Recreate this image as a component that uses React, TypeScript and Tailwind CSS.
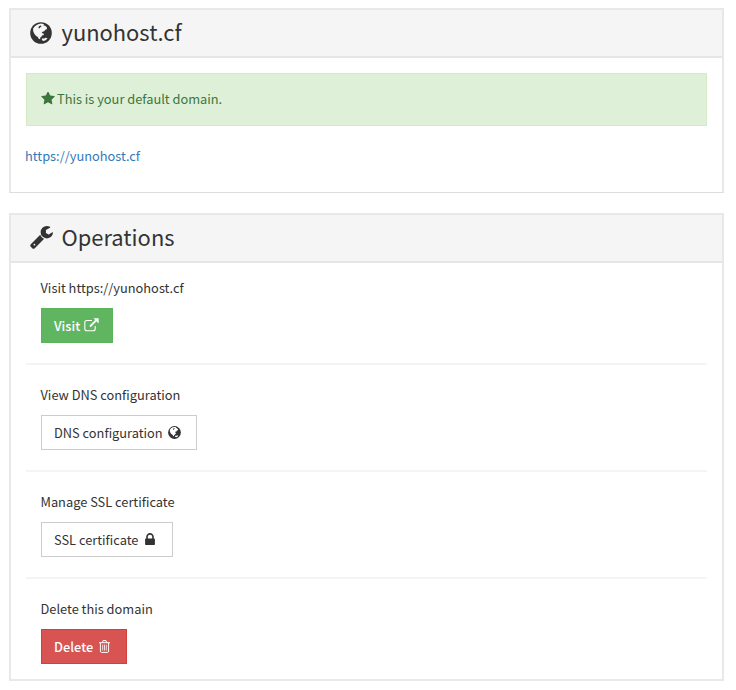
import type { ReactNode } from "react";

function Globe({ className, land }: { className: string; land: string }) {
  return (
    <svg viewBox="0 0 22 22" className={className} fill="currentColor">
      <circle cx="11" cy="11" r="10.8" />
      <g className={land}>
        <path d="M3.1 6.4 5.1 4 8 2.3l3.2-.7 2.9.6-.7 1.2 1.9.3 1.7 1.9-.3 1.8-1.5.3-.9 1.5-1.8.5-.8 1.3 1.8.5.4 1.4-1.5.4-.9 1.3-1.2.9-.2 1.7-1.4-.4-.9-1.8-1.9-1.2-1.6-2-1.1-2.5z" />
        <path d="m11.8 16.4 2.5.2 1.4-.8 1.8.5-1.5 1.8-2.2.9-1.8-.8z" />
      </g>
      <path d="m9.4 4 1.5-.4.6 1-1.2.7-.4 1-1.2-.1-.2-1.2z" />
    </svg>
  );
}

function Wrench() {
  return (
    <svg viewBox="64 128 1664 1664" className="h-[23px] w-[23px]" fill="currentColor">
      <path d="M448 1472q0-26-19-45t-45-19-45 19-19 45 19 45 45 19 45-19 19-45zm644-420l-682 682q-37 37-90 37-52 0-91-37l-106-108q-38-36-38-90 0-53 38-91l681-681q39 98 114.5 173.5t173.5 114.5zm634-435q0 39-23 106-47 134-164.5 217.5t-258.5 83.5q-185 0-316.5-131.5t-131.5-316.5 131.5-316.5 316.5-131.5q58 0 121.5 16.5t107.5 46.5q16 11 16 28t-16 28l-293 169v224l193 107q5-3 79-48.5t135.5-81 70.5-35.5q15 0 23.5 10t8.5 25z" />
    </svg>
  );
}

function Star() {
  return (
    <svg viewBox="64 96 1664 1600" className="h-[13px] w-[14px]" fill="currentColor">
      <path d="M1728 647q0 22-26 48l-363 354 86 500q1 7 1 20 0 21-10.5 35.5t-30.5 14.5q-19 0-40-12l-449-236-449 236q-22 12-40 12-21 0-31.5-14.5t-10.5-35.5q0-6 2-20l86-500-364-354q-25-27-25-48 0-37 56-46l502-73 225-455q19-41 49-41t49 41l225 455 502 73q56 9 56 46z" />
    </svg>
  );
}

function Lock() {
  return (
    <svg viewBox="320 128 1152 1408" className="-mt-px h-[12px] w-[10px]" fill="currentColor">
      <path d="M640 768h512v-192q0-106-75-181t-181-75-181 75-75 181v192zm832 96v576q0 40-28 68t-68 28h-960q-40 0-68-28t-28-68v-576q0-40 28-68t68-28h32v-192q0-184 132-316t316-132 316 132 132 316v192h32q40 0 68 28t28 68z" />
    </svg>
  );
}

function External() {
  return (
    <svg viewBox="0 0 15 14" className="-mt-0.5 h-[14px] w-[15px]" fill="none" stroke="currentColor">
      <path d="M8 2.5H2.8Q.8 2.5.8 4.5v6.2q0 2 2 2h6.4q2 0 2-2V8" strokeWidth="1.1" />
      <path d="m6 8.5 6-6" strokeWidth="1.8" />
      <path d="M9.5.3h5.1v5.1z" fill="currentColor" stroke="none" />
    </svg>
  );
}

function Trash() {
  return (
    <svg viewBox="0 0 11 13" className="h-[13px] w-[11px]" fill="none" stroke="currentColor">
      <path d="M0 2.7h11M3.4 2.5l.6-1.9h3l.6 1.9M1.4 3v8.1q0 1.3 1.2 1.3h5.8q1.2 0 1.2-1.3V3" />
      <path d="M3.7 4.7v5.8M5.5 4.7v5.8M7.3 4.7v5.8" strokeWidth=".8" />
    </svg>
  );
}

function Panel({ icon, title, className, children }: { icon: ReactNode; title: string; className: string; children: ReactNode }) {
  return (
    <section className={`border-2 border-[#e8e8e8] bg-white ${className}`}>
      <h2 className="flex h-[48px] items-center border-b-2 border-[#e6e6e6] bg-[#f5f5f5] pl-[19px] text-[21.9px]">
        <span className="-mt-px mr-[8.5px] w-[23px]">{icon}</span>
        <span className="-mt-[3px] leading-[30px]">{title}</span>
      </h2>
      {children}
    </section>
  );
}

function Operation({ label, button, icon, tone }: { label: string; button: string; icon: ReactNode; tone: string }) {
  return (
    <div className="h-[107px] border-b-2 border-[#f4f4f4] px-[15px] pt-[19px] last:border-0">
      <p className="-ml-[0.5px] mb-[9px] h-[22px] leading-[22px]">{label}</p>
      <button className={`flex h-[35px] items-center border pl-3 ${tone}`}>
        <span>{button}</span>
        {icon}
      </button>
    </div>
  );
}

export default function App() {
  return (
    <main className="h-[690px] overflow-hidden bg-white px-[9px] pt-2 font-['Noto_Sans_CJK_SC',sans-serif] text-[12.82px] text-[#333333]">
      <div className="w-[715px]">
        <Panel icon={<Globe land="fill-[#f5f5f5]" className="h-[22px] w-[22px]" />} title="yunohost.cf" className="h-[185px] border-b border-b-[#dddddd]">
          <div className="px-[15px] pt-[15px]">
            <div className="mb-[19px] flex h-[53px] items-center border border-[#d6e9c6] bg-[#dff0d8] pb-0.5 pl-[14px] text-[#3c763d]">
              <Star />
              <span className="ml-0.5">This is your default domain.</span>
            </div>
            <a className="-ml-px block leading-[22px] text-[#337ab7]">https://yunohost.cf</a>
          </div>
        </Panel>
        <Panel icon={<Wrench />} title="Operations" className="mt-5 h-[468px]">
          <div className="-mt-[5px] px-[15px]">
            <Operation label="Visit https://yunohost.cf" button="Visit" icon={<span className="ml-1"><External /></span>} tone="w-[72px] border-[#5ab55a] bg-[#60b660] font-medium text-white" />
            <Operation label="View DNS configuration" button="DNS configuration" icon={<Globe land="fill-white" className="ml-[5px] h-[13px] w-[13px]" />} tone="w-[156px] border-[#cccccc] bg-white" />
            <Operation label="Manage SSL certificate" button="SSL certificate" icon={<span className="ml-[7px]"><Lock /></span>} tone="w-[132px] border-[#cccccc] bg-white" />
            <Operation label="Delete this domain" button="Delete" icon={<span className="ml-1.5"><Trash /></span>} tone="w-[86px] border-[#d43f3a] bg-[#d75452] font-medium text-white" />
          </div>
        </Panel>
      </div>
    </main>
  );
}
